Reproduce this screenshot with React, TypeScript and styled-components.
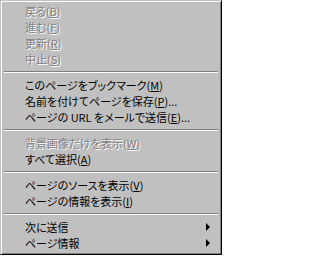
import React from "react";
import styled, { createGlobalStyle } from "styled-components";

const GlobalStyle = createGlobalStyle`
    html, body {
        margin: 0;
        padding: 0;
        background: #ffffff;
    }
`;

const MenuStyled = styled.div`
    width: 222px;
    box-sizing: border-box;
    background-color: #c0c0c0;
    border: 1px solid;
    border-color: #c0c0c0 #000000 #000000 #c0c0c0;
    box-shadow: inset 1px 1px 0 #ffffff, inset -1px -1px 0 #808080;
    padding: 2px 2px 3px 2px;
    display: flex;
    flex-direction: column;
    font-family: "Noto Sans CJK JP", "Noto Sans", sans-serif;
    font-size: 11px;
    font-feature-settings: "palt";
    cursor: default;
    user-select: none;
`;

const Row = styled.div<{ disabled?: boolean }>`
    height: 16px;
    display: flex;
    align-items: center;
    padding: 0 9px 0 22px;
    white-space: nowrap;
    color: ${props => props.disabled ? '#808080' : '#000000'};
    text-shadow: ${props => props.disabled ? '1px 1px 0 #ffffff' : 'none'};
    .label {
        flex: 1;
        line-height: 16px;
    }
`;

const Key = styled.span`
    text-decoration: underline;
    text-underline-offset: 1px;
`;

const Separator = styled.div`
    height: 10px;
    display: flex;
    flex-direction: column;
    justify-content: center;
    padding: 0 1px;
    &::before {
        content: "";
        display: block;
        height: 1px;
        background: #808080;
    }
    &::after {
        content: "";
        display: block;
        height: 1px;
        background: #ffffff;
    }
`;

const SubArrow = styled.span`
    width: 0;
    height: 0;
    border-left: 4px solid #000000;
    border-top: 4px solid transparent;
    border-bottom: 4px solid transparent;
`;

type Item = {
    text: string;
    key?: string;
    tail?: string;
    disabled?: boolean;
    sub?: boolean;
};

const groups: Item[][] = [
    [
        { text: "戻る", key: "B", disabled: true },
        { text: "進む", key: "F", disabled: true },
        { text: "更新", key: "R", disabled: true },
        { text: "中止", key: "S", disabled: true },
    ],
    [
        { text: "このページをブックマーク", key: "M" },
        { text: "名前を付けてページを保存", key: "P", tail: "..." },
        { text: "ページの URL をメールで送信", key: "E", tail: "..." },
    ],
    [
        { text: "背景画像だけを表示", key: "W", disabled: true },
        { text: "すべて選択", key: "A" },
    ],
    [
        { text: "ページのソースを表示", key: "V" },
        { text: "ページの情報を表示", key: "I" },
    ],
    [
        { text: "次に送信", sub: true },
        { text: "ページ情報", sub: true },
    ],
];

const MenuRow = ({ item }: { item: Item }) => (
    <Row disabled={item.disabled}>
        <span className="label">
            {item.text}
            {item.key && <>(<Key>{item.key}</Key>)</>}
            {item.tail}
        </span>
        {item.sub && <SubArrow />}
    </Row>
);

const App = () => {
    return (
        <>
            <GlobalStyle />
            <MenuStyled>
                {groups.map((group, gi) => (
                    <React.Fragment key={gi}>
                        {gi > 0 && <Separator />}
                        {group.map(item => <MenuRow key={item.text} item={item} />)}
                    </React.Fragment>
                ))}
            </MenuStyled>
        </>
    );
};

export default App;
